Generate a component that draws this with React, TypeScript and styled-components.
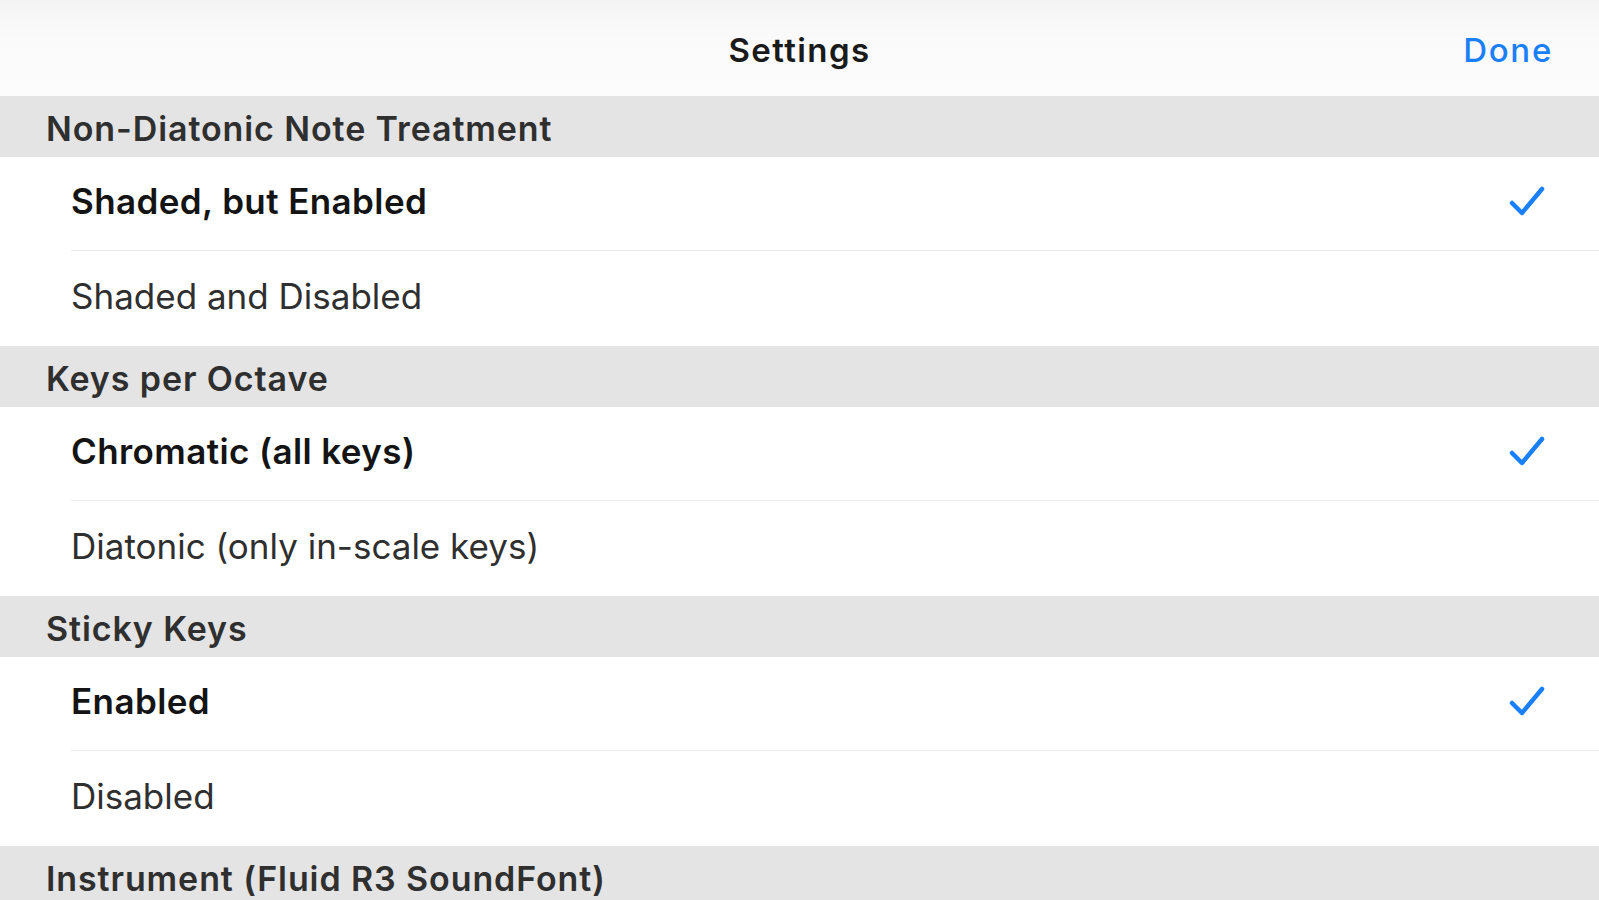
import React from "react";
import styled, { createGlobalStyle } from "styled-components";

const GlobalStyle = createGlobalStyle`
  html, body {
    margin: 0;
    padding: 0;
    background: #ffffff;
    overflow: hidden;
  }
  body {
    font-family: Inter, "Liberation Sans", Arial, sans-serif;
    -webkit-font-smoothing: antialiased;
  }
`;

type Option = { label: string; selected: boolean };
type Section = { title: string; options: Option[] };

const sections: Section[] = [
  {
    title: "Non-Diatonic Note Treatment",
    options: [
      { label: "Shaded, but Enabled", selected: true },
      { label: "Shaded and Disabled", selected: false },
    ],
  },
  {
    title: "Keys per Octave",
    options: [
      { label: "Chromatic (all keys)", selected: true },
      { label: "Diatonic (only in-scale keys)", selected: false },
    ],
  },
  {
    title: "Sticky Keys",
    options: [
      { label: "Enabled", selected: true },
      { label: "Disabled", selected: false },
    ],
  },
  {
    title: "Instrument (Fluid R3 SoundFont)",
    options: [],
  },
];

const Check = () => (
  <svg width="40" height="40" viewBox="0 0 40 40">
    <polyline
      points="5,20 15,30 35,6"
      fill="none"
      stroke="#1a7ffa"
      strokeWidth="4.5"
      strokeLinecap="round"
      strokeLinejoin="round"
    />
  </svg>
);

const App = () => {
  return (
    <Page>
      <GlobalStyle />
      <NavBar>
        <NavSide />
        <Title>Settings</Title>
        <NavSide>
          <DoneButton>Done</DoneButton>
        </NavSide>
      </NavBar>
      {sections.map((s) => (
        <div key={s.title}>
          <SectionHeader>{s.title}</SectionHeader>
          {s.options.map((o, i) => {
            const last = i === s.options.length - 1;
            return (
              <Row key={o.label}>
                <RowInner last={last}>
                  <RowLabel selected={o.selected}>{o.label}</RowLabel>
                  {o.selected && (
                    <CheckWrap>
                      <Check />
                    </CheckWrap>
                  )}
                </RowInner>
              </Row>
            );
          })}
        </div>
      ))}
    </Page>
  );
};

export default App;

const Page = styled.div`
  width: 1599px;
  height: 900px;
  overflow: hidden;
  background: #ffffff;
`;

const NavBar = styled.div`
  height: 96px;
  display: flex;
  align-items: center;
  justify-content: space-between;
  padding: 4px 46px 0;
  box-sizing: border-box;
  background: linear-gradient(#f4f4f4, #fafafa 40%, #fcfcfc);
`;

const NavSide = styled.div`
  width: 200px;
  display: flex;
  justify-content: flex-end;
`;

const Title = styled.div`
  font-size: 33px;
  font-weight: 600;
  color: #1a1a1a;
  letter-spacing: 1.4px;
`;

const DoneButton = styled.div`
  font-size: 33px;
  font-weight: 500;
  color: #1a7ffa;
  cursor: pointer;
  letter-spacing: 1.7px;
`;

const SectionHeader = styled.div`
  height: 61px;
  box-sizing: border-box;
  display: flex;
  align-items: center;
  padding: 4px 0 0 46px;
  background: #e4e4e4;
  font-size: 34px;
  font-weight: 600;
  color: #2f2f2f;
  letter-spacing: 0.9px;
`;

const Row = styled.div`
  padding-left: 71px;
  background: #ffffff;
`;

const RowInner = styled.div<{ last: boolean }>`
  height: ${(p) => (p.last ? 95 : 94)}px;
  box-sizing: border-box;
  display: flex;
  align-items: center;
  justify-content: space-between;
  padding: 0 52px 6px 0;
  border-bottom: ${(p) => (p.last ? "none" : "1px solid #ececec")};
`;

const RowLabel = styled.div<{ selected: boolean }>`
  font-size: 35px;
  font-weight: ${(p) => (p.selected ? 600 : 400)};
  color: ${(p) => (p.selected ? "#141414" : "#2f2f2f")};
  letter-spacing: ${(p) => (p.selected ? 0.4 : 0)}px;
`;

const CheckWrap = styled.div`
  display: flex;
  align-items: center;
  padding-top: 4px;
`;
